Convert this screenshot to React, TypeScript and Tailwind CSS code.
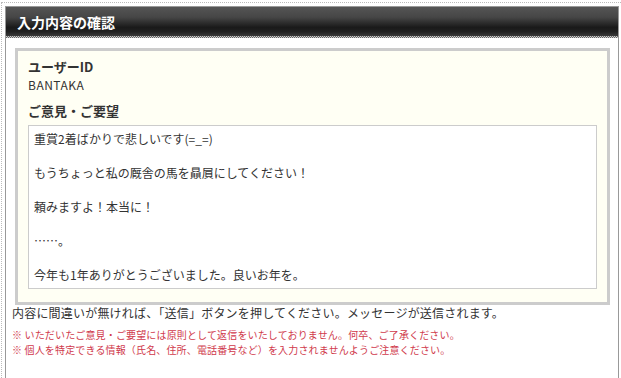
import React from 'react';

const lines = [
  '重賞2着ばかりで悲しいです(=_=)',
  '',
  'もうちょっと私の厩舎の馬を贔屓にしてください！',
  '',
  '頼みますよ！本当に！',
  '',
  '……。',
  '',
  '今年も1年ありがとうございました。良いお年を。',
];

const App = () => {
  return (
    <div
      className="w-[621px] h-[378px] bg-white overflow-hidden text-[#333]"
      style={{ fontFamily: '"Noto Sans CJK JP", "Liberation Sans", sans-serif' }}
    >
      <div className="mt-[2px] ml-[1px] h-[376px] border-l border-t border-dotted border-[#bbb] pl-[3px] pt-[3px] pr-[2px]">
        {/* panel */}
        <div className="h-full border-x border-t border-[#999] bg-white">
          <div className="h-[29px] flex items-center px-[11px] bg-[linear-gradient(to_bottom,#555_0%,#464646_35%,#1a1a1a_70%,#202020_85%,#3a3a3a_100%)]">
            <h1 className="text-[14px] font-bold text-white leading-none">入力内容の確認</h1>
          </div>
          <div className="h-[2px] bg-[conic-gradient(#666_25%,#ccc_0_50%,#666_0_75%,#ccc_0)] bg-[length:2px_2px]" />

          <div className="pl-[9px] pr-[8px] pt-[10px]">
            <div className="border-[3px] border-[#ccc] bg-[#fffff4] px-[10px] pt-[7px] pb-[13px]">
              <p className="text-[13px] font-bold leading-[17px]">ユーザーID</p>
              <p className="mt-[2px] text-[12px] leading-[16px] tracking-[0.5px]">BANTAKA</p>

              <p className="mt-[9px] text-[13px] font-bold leading-[18px]">ご意見・ご要望</p>
              <div className="mt-[5px] border border-[#ccc] bg-white px-[5px] pt-[4px] pb-[5px] text-[12px] leading-[17px]">
                {lines.map((l, i) => (
                  <p key={i} className="h-[17px] whitespace-pre">{l}</p>
                ))}
              </div>
            </div>

            <p className="text-[12px] leading-[16px] -ml-[3px] tracking-[0.2px]">
              内容に間違いが無ければ、「送信」ボタンを押してください。メッセージが送信されます。
            </p>
            <div className="mt-[6px] text-[10px] leading-[15px] text-[#d03a4c] -ml-[3px] tracking-[0.15px]">
              <p>※ いただいたご意見・ご要望には原則として返信をいたしておりません。何卒、ご了承ください。</p>
              <p>※ 個人を特定できる情報（氏名、住所、電話番号など）を入力されませんようご注意ください。</p>
            </div>
          </div>
        </div>
      </div>
    </div>
  );
};

export default App;
